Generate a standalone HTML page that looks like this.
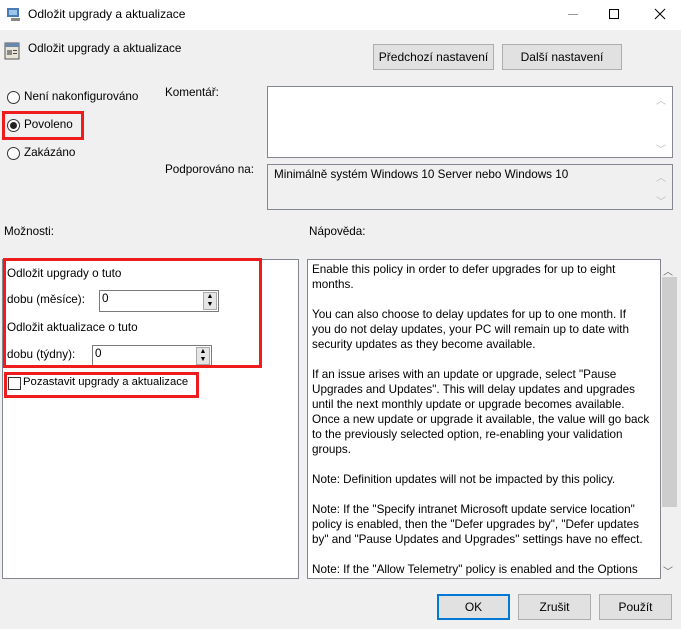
<!DOCTYPE html>
<html><head><meta charset="utf-8"><style>
*{margin:0;padding:0;box-sizing:border-box}
body{width:681px;height:629px;background:#f0f0f0;font-family:"Liberation Sans",sans-serif;font-size:11.7px;color:#000;position:relative;overflow:hidden}
.a{position:absolute;white-space:nowrap}
.btn{position:absolute;background:#e1e1e1;border:1px solid #adadad;text-align:center;line-height:24px;font-size:12px}
.red{position:absolute;border:3px solid #ee1c1c}
.radio{position:absolute;width:13px;height:13px;border:1px solid #333;border-radius:50%;background:#fff}
.sb{position:absolute;color:#bbb;font-size:10px}
</style></head><body>
<div class="a" style="left:0;top:0;width:681px;height:30px;background:#fff"></div>
<svg class="a" style="left:6px;top:6px" width="16" height="16"><rect x="1" y="2" width="12" height="9" fill="#4a7bb5"/><rect x="3" y="4" width="8" height="5" fill="#9cc6ea"/><rect x="5" y="12" width="9" height="3" fill="#888"/></svg>
<div class="a" style="left:28px;top:7px;font-size:12px">Odložit upgrady a aktualizace</div>
<div class="a" style="left:568px;top:14px;width:10px;height:1px;background:#999"></div>
<div class="a" style="left:609px;top:9px;width:10px;height:10px;border:1px solid #000"></div>
<svg class="a" style="left:654px;top:8px" width="12" height="12"><path d="M1 1L11 11M11 1L1 11" stroke="#000" stroke-width="1"/></svg>

<svg class="a" style="left:4px;top:42px" width="16" height="18"><rect x="1" y="1" width="14" height="16" fill="#e8e4d8" stroke="#555"/><rect x="1" y="1" width="14" height="4" fill="#6a86a8"/><rect x="3" y="8" width="5" height="5" fill="#888"/><rect x="9" y="8" width="4" height="1" fill="#444"/><rect x="9" y="11" width="4" height="1" fill="#444"/></svg>
<div class="a" style="left:28px;top:42px">Odložit upgrady a aktualizace</div>
<div class="btn" style="left:373px;top:44px;width:121px;height:26px">Předchozí nastavení</div>
<div class="btn" style="left:502px;top:44px;width:120px;height:26px">Další nastavení</div>

<div class="radio" style="left:7px;top:91px"></div>
<div class="a" style="left:24px;top:90px">Není nakonfigurováno</div>
<div class="radio" style="left:7px;top:119px"></div><div class="a" style="left:10px;top:122px;width:7px;height:7px;border-radius:50%;background:#222"></div>
<div class="a" style="left:24px;top:118px">Povoleno</div>
<div class="red" style="left:2px;top:111px;width:82px;height:29px"></div>
<div class="radio" style="left:7px;top:147px"></div>
<div class="a" style="left:24px;top:146px">Zakázáno</div>

<div class="a" style="left:165px;top:86px">Komentář:</div>
<div class="a" style="left:267px;top:86px;width:406px;height:72px;background:#fff;border:1px solid #828790"></div>
<div class="sb" style="left:656px;top:92px">︿</div><div class="sb" style="left:656px;top:141px">﹀</div>
<div class="a" style="left:165px;top:163px">Podporováno na:</div>
<div class="a" style="left:267px;top:164px;width:406px;height:46px;border:1px solid #828790"></div>
<div class="a" style="left:274px;top:168px">Minimálně systém Windows 10 Server nebo Windows 10</div>
<div class="sb" style="left:656px;top:169px">︿</div><div class="sb" style="left:656px;top:193px">﹀</div>

<div class="a" style="left:4px;top:225px">Možnosti:</div>
<div class="a" style="left:309px;top:225px">Nápověda:</div>

<div class="a" style="left:2px;top:259px;width:297px;height:320px;background:#fff;border:1px solid #828790"></div>
<div class="a" style="left:7px;top:267px">Odložit upgrady o tuto</div>
<div class="a" style="left:7px;top:293px">dobu (měsíce):</div>
<div class="a" style="left:99px;top:290px;width:120px;height:22px;background:#fff;border:1px solid #7a7a7a;padding:1px 2px">0</div>
<div class="a" style="left:203px;top:292px;width:14px;height:18px;background:#e5e5e5;border:1px solid #aaa;font-size:7px;line-height:8px;text-align:center">▲<br>▼</div>
<div class="a" style="left:7px;top:321px">Odložit aktualizace o tuto</div>
<div class="a" style="left:7px;top:348px">dobu (týdny):</div>
<div class="a" style="left:92px;top:345px;width:120px;height:22px;background:#fff;border:1px solid #7a7a7a;padding:1px 2px">0</div>
<div class="a" style="left:196px;top:347px;width:14px;height:18px;background:#e5e5e5;border:1px solid #aaa;font-size:7px;line-height:8px;text-align:center">▲<br>▼</div>
<div class="red" style="left:3px;top:258px;width:259px;height:110px"></div>
<div class="a" style="left:8px;top:377px;width:13px;height:13px;border:1px solid #333;background:#fff"></div>
<div class="a" style="left:23px;top:376px;font-size:11.3px">Pozastavit upgrady a aktualizace</div>
<div class="red" style="left:4px;top:372px;width:195px;height:26px"></div>

<div class="a" style="left:307px;top:259px;width:354px;height:320px;background:#fff;border:1px solid #828790"></div>
<div class="a" style="left:661px;top:259px;width:17px;height:320px;background:#f0f0f0"></div>
<div class="a" style="left:662px;top:277px;width:15px;height:230px;background:#cdcdcd"></div>
<div class="sb" style="left:663px;top:263px;color:#666">︿</div><div class="sb" style="left:663px;top:563px;color:#666">﹀</div>
<div class="a" style="left:312px;top:262px;font-size:11.7px;line-height:15px;white-space:pre">Enable this policy in order to defer upgrades for up to eight
months.

You can also choose to delay updates for up to one month. If
you do not delay updates, your PC will remain up to date with
security updates as they become available.

If an issue arises with an update or upgrade, select "Pause
Upgrades and Updates". This will delay updates and upgrades
until the next monthly update or upgrade becomes available.
Once a new update or upgrade it available, the value will go back
to the previously selected option, re-enabling your validation
groups.

Note: Definition updates will not be impacted by this policy.

Note: If the "Specify intranet Microsoft update service location"
policy is enabled, then the "Defer upgrades by", "Defer updates
by" and "Pause Updates and Upgrades" settings have no effect.

Note: If the "Allow Telemetry" policy is enabled and the Options</div>

<div class="btn" style="left:437px;top:594px;width:73px;height:26px;border:2px solid #0078d7;line-height:22px">OK</div>
<div class="btn" style="left:518px;top:594px;width:73px;height:26px">Zrušit</div>
<div class="btn" style="left:599px;top:594px;width:73px;height:26px">Použít</div>
</body></html>
